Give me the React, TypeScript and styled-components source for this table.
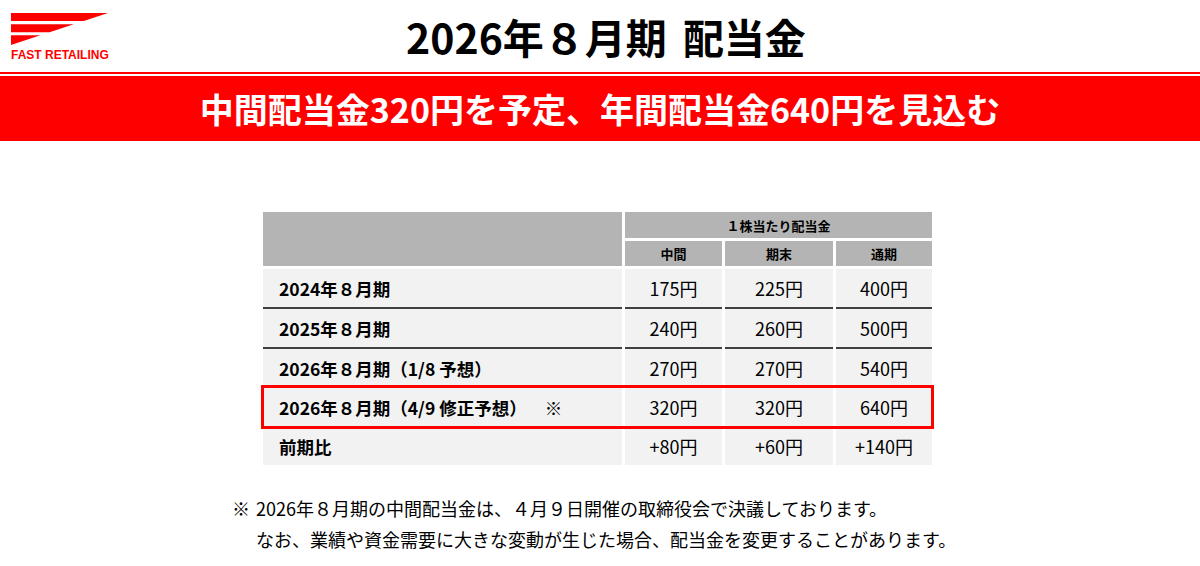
import styled, { createGlobalStyle } from "styled-components";

const GlobalStyle = createGlobalStyle`
  body {
    margin: 0;
    background: #ffffff;
    font-family: "Noto Sans CJK JP", "Noto Sans", sans-serif;
    color: #000000;
  }
`;

const Page = styled.div`
  width: 1200px;
  height: 566px;
  overflow: hidden;
`;

const Header = styled.header`
  display: grid;
  grid-template-columns: 1fr auto 1fr;
  align-items: center;
  height: 72px;
`;

const Logo = styled.div`
  display: flex;
  flex-direction: column;
  align-items: flex-start;
  gap: 4px;
  padding-left: 11px;
  padding-top: 2px;
`;

const LogoText = styled.span`
  font-family: "Liberation Sans", Arial, sans-serif;
  font-weight: 700;
  font-size: 12px;
  line-height: 12px;
  color: #ff0000;
  white-space: nowrap;
`;

const Title = styled.h1`
  margin: 0;
  padding-left: 12px;
  font-size: 41px;
  font-weight: 700;
  line-height: 1;
  white-space: nowrap;
`;

const TitleGap = styled.span`
  display: inline-block;
  width: 16px;
`;

const RedRule = styled.div`
  height: 2px;
  background: #ff0000;
  margin-bottom: 2px;
`;

const Banner = styled.div`
  height: 65px;
  background: #ff0000;
  display: flex;
  align-items: center;
  justify-content: center;
  color: #ffffff;
  font-size: 34px;
  font-weight: 700;
  white-space: nowrap;
`;

const Table = styled.div`
  margin: 71px 0 0 263px;
  width: 669px;
  display: flex;
  flex-direction: column;
  gap: 3px;
`;

const columns = "359px 97px 108px 96px";

const Head = styled.div`
  display: grid;
  grid-template-columns: ${columns};
  grid-template-rows: 26px 25px;
  gap: 3px;
`;

const HeadCell = styled.div<{ $span?: boolean; $tall?: boolean }>`
  background: #b4b4b4;
  display: flex;
  align-items: center;
  justify-content: center;
  font-size: 13px;
  font-weight: 700;
  grid-column: ${(p) => (p.$span ? "2 / 5" : "auto")};
  grid-row: ${(p) => (p.$tall ? "1 / 3" : "auto")};
`;

const Body = styled.div`
  display: flex;
  flex-direction: column;
`;

const Row = styled.div<{ $highlight?: boolean }>`
  display: grid;
  grid-template-columns: ${columns};
  column-gap: 3px;
  position: relative;
  z-index: ${(p) => (p.$highlight ? 1 : 0)};
  outline: ${(p) => (p.$highlight ? "3px solid #ff0000" : "none")};
  outline-offset: -1px;
`;

const Cell = styled.div<{ $h: number; $line?: boolean; $label?: boolean }>`
  height: ${(p) => p.$h}px;
  box-sizing: border-box;
  background: #f2f2f2;
  border-bottom: ${(p) => (p.$line ? "2px solid #404040" : "none")};
  display: flex;
  align-items: center;
  justify-content: ${(p) => (p.$label ? "flex-start" : "center")};
  padding-left: ${(p) => (p.$label ? "16px" : "0")};
  font-size: ${(p) => (p.$label ? "17.5px" : "18px")};
  font-weight: ${(p) => (p.$label ? 700 : 400)};
  white-space: nowrap;
`;

const Mark = styled.span`
  margin-left: 18px;
`;

const Notes = styled.div`
  margin: 28px 0 0 232px;
  display: flex;
  font-size: 18px;
  line-height: 31px;
`;

const NoteMark = styled.span`
  width: 24px;
  flex-shrink: 0;
`;

const NoteText = styled.div`
  display: flex;
  flex-direction: column;
  white-space: nowrap;
`;

function LogoMark() {
  // triangle cut by two white bands
  return (
    <svg width="97" height="32" viewBox="0 0 97 32">
      <polygon points="0,0 97,0 72.75,8 0,8" fill="#ff0000" />
      <polygon points="0,11.3 62.75,11.3 38.5,19.3 0,19.3" fill="#ff0000" />
      <polygon points="0,22.3 29.4,22.3 0,32" fill="#ff0000" />
    </svg>
  );
}

interface IRow {
  label: string;
  values: string[];
  mark?: boolean;
}

const rows: IRow[] = [
  { label: "2024年８月期", values: ["175円", "225円", "400円"] },
  { label: "2025年８月期", values: ["240円", "260円", "500円"] },
  { label: "2026年８月期（1/8 予想）", values: ["270円", "270円", "540円"] },
  { label: "2026年８月期（4/9 修正予想）", values: ["320円", "320円", "640円"], mark: true },
  { label: "前期比", values: ["+80円", "+60円", "+140円"] },
];

const heights = [40, 40, 38, 40, 38];

function App() {
  return (
    <Page>
      <GlobalStyle />
      <Header>
        <Logo>
          <LogoMark />
          <LogoText>FAST RETAILING</LogoText>
        </Logo>
        <Title>
          2026年８月期<TitleGap />配当金
        </Title>
        <div />
      </Header>
      <RedRule />
      <Banner>中間配当金320円を予定、年間配当金640円を見込む</Banner>

      <Table>
        <Head>
          <HeadCell $tall />
          <HeadCell $span>１株当たり配当金</HeadCell>
          <HeadCell>中間</HeadCell>
          <HeadCell>期末</HeadCell>
          <HeadCell>通期</HeadCell>
        </Head>
        <Body>
          {rows.map((row, i) => (
            <Row key={row.label} $highlight={row.mark}>
              <Cell $h={heights[i]} $line={i < 2} $label>
                {row.label}
                {row.mark && <Mark>※</Mark>}
              </Cell>
              {row.values.map((v, j) => (
                <Cell key={j} $h={heights[i]} $line={i < 2}>
                  {v}
                </Cell>
              ))}
            </Row>
          ))}
        </Body>
      </Table>

      <Notes>
        <NoteMark>※</NoteMark>
        <NoteText>
          <span>2026年８月期の中間配当金は、４月９日開催の取締役会で決議しております。</span>
          <span>なお、業績や資金需要に大きな変動が生じた場合、配当金を変更することがあります。</span>
        </NoteText>
      </Notes>
    </Page>
  );
}

export default App;
